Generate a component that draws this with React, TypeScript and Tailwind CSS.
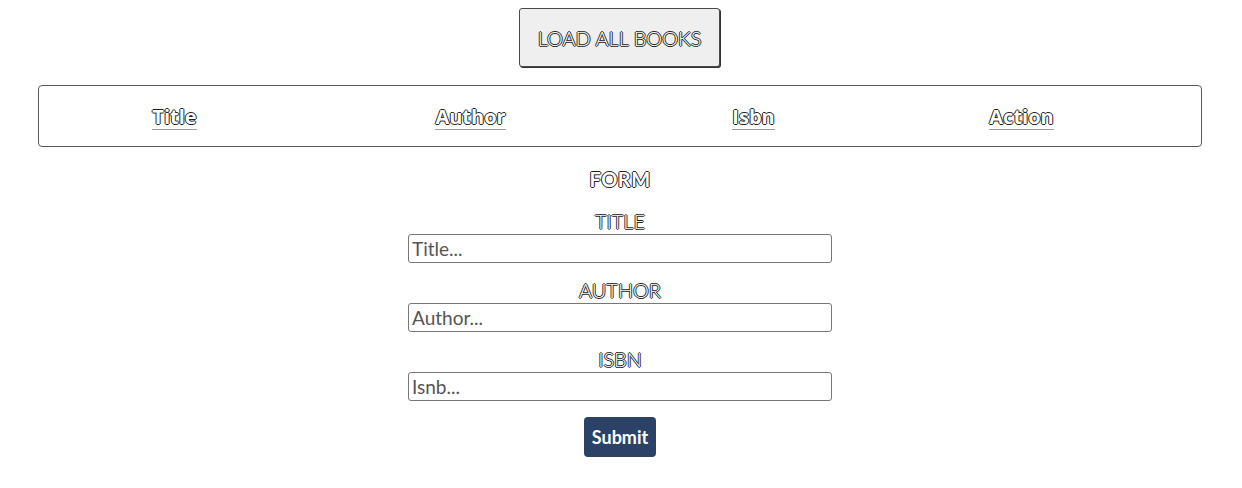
import React from 'react';

const outline = '[text-shadow:-1px_0_#222,1px_0_#222,0_-1px_#222,0_1px_#222]';

export default function App() {
  const fields = [
    { label: 'TITLE', placeholder: 'Title...' },
    { label: 'AUTHOR', placeholder: 'Author...' },
    { label: 'ISBN', placeholder: 'Isnb...' },
  ];

  return (
    <div className="min-h-[488px] w-full bg-white flex flex-col items-center pt-2 antialiased font-['Lato',sans-serif]">
      {/* Load button */}
      <button className="ml-[-3px] h-[59px] w-[201px] rounded-[3px] border border-[#4a4a4a] bg-[#efefef] shadow-[1px_1px_0_#333]">
        <span className={`text-[20px] font-light text-white ${outline}`}>LOAD ALL BOOKS</span>
      </button>

      {/* Table header */}
      <div className="mt-[18px] ml-[-3px] h-[62px] w-[1164px] rounded-[4px] border border-[#5a5a5a] grid grid-cols-[272px_320px_246px_290px] items-center pt-[3px]">
        {['Title', 'Author', 'Isbn', 'Action'].map((h) => (
          <div key={h} className="text-center">
            <span className="inline-block border-b border-[#9a9a9a] leading-[22px]">
              <span className={`font-['Open_Sans',sans-serif] text-[20px] font-bold text-white ${outline}`}>{h}</span>
            </span>
          </div>
        ))}
      </div>

      {/* Form */}
      <form className="mt-5 ml-[-2px] w-[424px] flex flex-col items-center" onSubmit={(e) => e.preventDefault()}>
        <h2 className={`h-6 leading-6 text-[20px] font-bold text-white tracking-[0.5px] ${outline}`}>FORM</h2>
        <div className="mt-[3px] w-full flex flex-col">
          {fields.map((f) => (
            <div key={f.label} className="mt-[15px] w-full flex flex-col items-center">
              <label className={`h-6 leading-6 text-[20px] font-light text-white ${outline}`}>{f.label}</label>
              <input
                className="mt-px h-[29px] w-full rounded-[3px] border border-[#767676] px-[3px] text-[19px] text-[#333] placeholder-[#555] outline-none"
                placeholder={f.placeholder}
              />
            </div>
          ))}
        </div>
        <button
          type="submit"
          className="mt-4 h-10 w-[72px] rounded-[4px] bg-[#2b4266] text-[18px] font-bold text-white"
        >
          Submit
        </button>
      </form>
    </div>
  );
}
